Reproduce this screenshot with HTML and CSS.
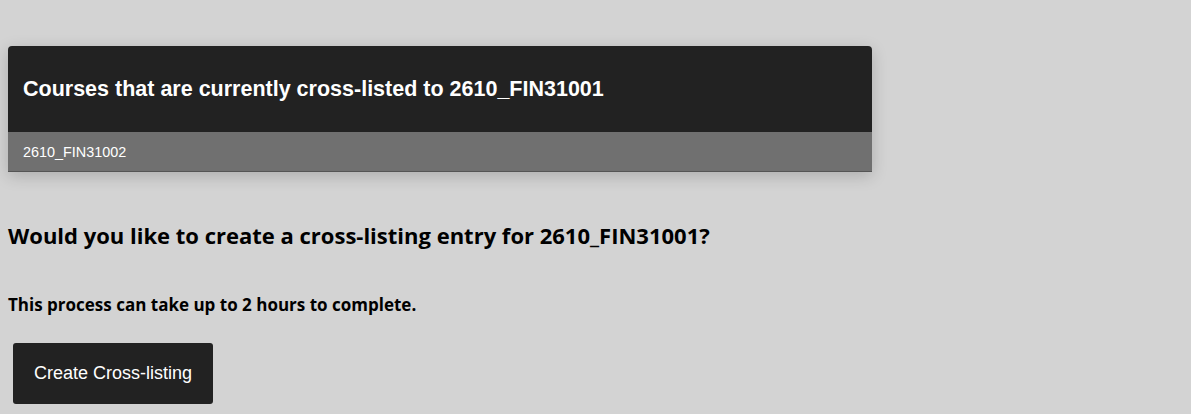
FILE: index.html
```html
<!DOCTYPE html>
<html>
<head>
<meta charset="utf-8">
<link rel="stylesheet" href="styles.css">
</head>
<body>
<main class="page">
  <section class="card">
    <div class="card-head">Courses that are currently cross-listed to 2610_FIN31001</div>
    <div class="card-row">2610_FIN31002</div>
  </section>
  <h2 class="question">Would you like to create a cross-listing entry for 2610_FIN31001?</h2>
  <h3 class="note">This process can take up to 2 hours to complete.</h3>
  <button class="btn">Create Cross-listing</button>
</main>
</body>
</html>
```
FILE: styles.css
```css
html, body { margin: 0; padding: 0; }
body {
  background: #d3d3d3;
  font-family: "Open Sans", "Liberation Sans", sans-serif;
  color: #000;
}
.page {
  padding: 46px 8px 0 8px;
}
.card {
  width: 864px;
  border-radius: 4px 4px 0 0;
  box-shadow: 0 4px 16px rgba(0,0,0,0.18);
  border-bottom: 1px solid #555;
  overflow: hidden;
}
.card-head {
  background: #222;
  color: #fff;
  font-family: "Liberation Sans", Arial, sans-serif;
  font-weight: bold;
  font-size: 21.5px;
  height: 86px;
  display: flex;
  align-items: center;
  padding: 0 15px;
}
.card-row {
  background: #707070;
  color: #fff;
  font-family: "Liberation Sans", Arial, sans-serif;
  font-size: 14.4px;
  height: 39px;
  display: flex;
  align-items: center;
  padding: 0 15px;
}
.question {
  margin: 49px 0 0 0;
  font-size: 22px;
  font-weight: 700;
  line-height: 28px;
}
.note {
  margin: 45px 0 0 0;
  font-size: 17px;
  font-weight: 700;
  line-height: 22px;
}
.btn {
  margin: 27px 0 0 5px;
  width: 200px;
  height: 61px;
  background: #222;
  color: #fff;
  border: none;
  border-radius: 3px;
  font-family: "Liberation Sans", Arial, sans-serif;
  font-size: 18px;
  padding: 0;
}
```
